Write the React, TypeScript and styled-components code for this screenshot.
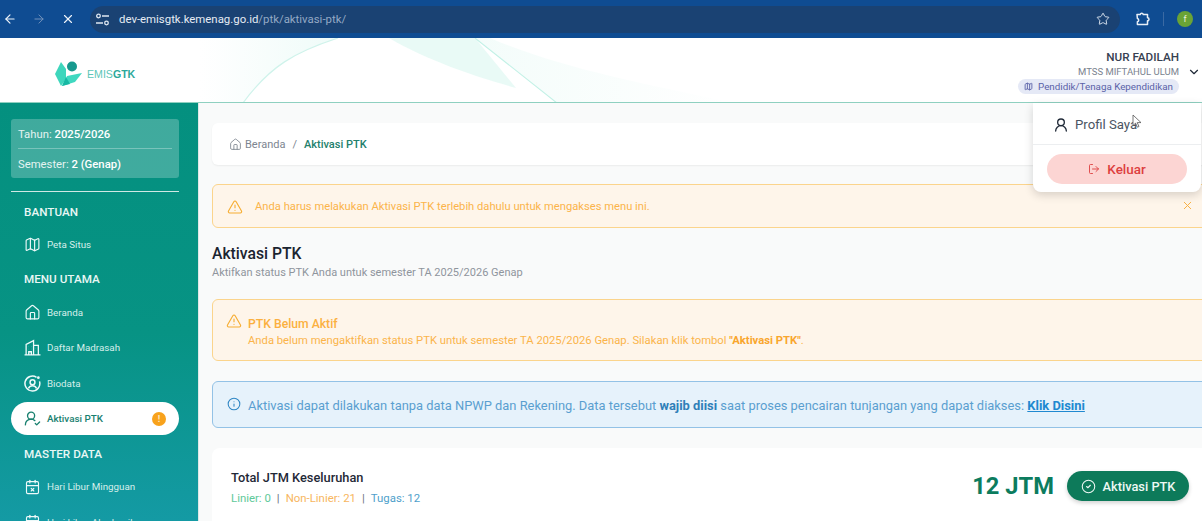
import React from 'react';
import styled, { createGlobalStyle } from 'styled-components';
import {
    ArrowLeft,
    ArrowRight,
    CalendarPlus,
    CalendarX,
    ChevronDown,
    CircleCheck,
    House,
    Info,
    LogOut,
    Map as MapIcon,
    Star,
    TriangleAlert,
    UserRound,
    UserRoundCheck,
    X
} from 'lucide-react';

const FONT = 'Roboto, "Noto Sans", "Liberation Sans", sans-serif';

const GlobalStyle = createGlobalStyle`
    html, body {
        margin: 0;
        padding: 0;
        background: #ffffff;
    }
    body {
        font-family: ${FONT};
        overflow: hidden;
    }
    * {
        box-sizing: border-box;
    }
`;

const Page = styled.div`
    position: relative;
    width: 1202px;
    height: 521px;
    overflow: hidden;
    display: flex;
    flex-direction: column;
`;

/* browser chrome */

const BrowserBar = styled.div`
    flex: 0 0 38px;
    height: 38px;
    background: #0f4c92;
    display: flex;
    align-items: center;
    gap: 9px;
    color: #e8eef6;
`;

const NavButton = styled.div<{ $dim?: boolean }>`
    width: 20px;
    display: flex;
    justify-content: center;
    color: ${(p) => (p.$dim ? '#7393bb' : '#eef3f9')};
`;

const AddressBar = styled.div`
    margin-left: 3px;
    flex: 1;
    height: 27px;
    background: #1a4273;
    border-radius: 14px;
    display: flex;
    align-items: center;
    padding: 0 10px 0 2px;
`;

const TuneBadge = styled.div`
    width: 20px;
    height: 20px;
    display: flex;
    align-items: center;
    justify-content: center;
    margin-right: 7px;
`;

const Url = styled.div`
    flex: 1;
    font-size: 11.4px;
    color: #e6ecf4;
`;

const UrlPath = styled.span`
    color: #94a9c5;
`;

const BarActions = styled.div`
    width: 73px;
    display: flex;
    align-items: center;
    padding-left: 6px;
`;

const BarDivider = styled.div`
    width: 1px;
    height: 14px;
    margin: 0 13px 0 12px;
    background: #3b6aa3;
`;

const Avatar = styled.div`
    width: 16px;
    height: 16px;
    border-radius: 50%;
    background: #6aa336;
    color: #e9f3dc;
    font-size: 9px;
    display: flex;
    align-items: center;
    justify-content: center;
`;

/* app header */

const Header = styled.header`
    position: relative;
    flex: 0 0 65px;
    height: 65px;
    background: #ffffff;
    border-bottom: 1px solid #8fd0c0;
    display: flex;
    align-items: flex-start;
    justify-content: space-between;
    padding-left: 55px;
    overflow: hidden;
`;

const Waves = styled.svg`
    position: absolute;
    left: 200px;
    top: 0;
`;

const Brand = styled.div`
    position: relative;
    display: flex;
    align-items: center;
    gap: 4px;
    margin-top: 23px;
`;

const BrandName = styled.div`
    font-family: 'Liberation Sans', sans-serif;
    font-size: 10.6px;
    color: #5cc6b8;
    b {
        color: #2ba89a;
    }
`;

const UserBlock = styled.div`
    position: relative;
    display: flex;
    align-items: center;
    gap: 8px;
    padding: 12px 1px 0 0;
`;

const UserInfo = styled.div`
    display: flex;
    flex-direction: column;
    align-items: flex-end;
`;

const UserName = styled.div`
    font-size: 11.7px;
    line-height: 15px;
    font-weight: 500;
    color: #374151;
`;

const UserSchool = styled.div`
    font-size: 9.5px;
    line-height: 14px;
    color: #7a828e;
`;

const RoleBadge = styled.div`
    display: flex;
    align-items: center;
    gap: 5px;
    height: 15px;
    padding: 0 6px;
    border-radius: 8px;
    background: #e5e9f6;
    color: #5a62a8;
    font-size: 9.8px;
`;

/* dropdown */

const Menu = styled.div`
    position: absolute;
    left: 1033px;
    top: 103px;
    width: 168px;
    height: 89px;
    background: #ffffff;
    border-radius: 0 0 8px 8px;
    box-shadow: 0 3px 10px rgba(0, 0, 0, 0.16);
    z-index: 5;
`;

const MenuItem = styled.div`
    height: 42px;
    padding: 2px 0 0 20px;
    border-bottom: 1px solid #eceef0;
    display: flex;
    align-items: center;
    gap: 6px;
    color: #1f2937;
    font-size: 13.2px;
    span {
        color: #4b5563;
    }
`;

const LogoutButton = styled.div`
    margin: 9px 14px 0;
    height: 30px;
    border-radius: 15px;
    background: #fcd5d3;
    color: #dc3f3f;
    font-size: 13.4px;
    font-weight: 500;
    display: flex;
    align-items: center;
    justify-content: center;
    gap: 7px;
`;

const Cursor = styled.svg`
    position: absolute;
    left: 1132px;
    top: 114px;
    z-index: 6;
`;

/* layout */

const Body = styled.div`
    flex: 1;
    display: flex;
    min-height: 0;
`;

const Sidebar = styled.aside`
    flex: 0 0 199px;
    width: 199px;
    padding: 16px 19px 0 11px;
    background: linear-gradient(180deg, #04907f 0%, #079384 55%, #149aa4 100%);
    border-right: 1px solid #dfe7e6;
    overflow: hidden;
`;

const YearBox = styled.div`
    height: 59px;
    padding: 0 7px;
    border-radius: 3px;
    background: rgba(255, 255, 255, 0.24);
    color: #e4f3f1;
    font-size: 11.3px;
    display: flex;
    flex-direction: column;
    b {
        color: #ffffff;
        font-weight: 500;
    }
`;

const YearRow = styled.div<{ $line?: boolean }>`
    flex: 1;
    padding-top: 1px;
    display: flex;
    align-items: center;
    white-space: pre;
    border-bottom: ${(p) => (p.$line ? '1px solid rgba(255,255,255,0.3)' : 'none')};
`;

const SideDivider = styled.div`
    height: 1px;
    margin: 13px 0 0;
    background: #cfe9e5;
`;

const SectionTitle = styled.div<{ $top: number }>`
    margin-top: ${(p) => p.$top}px;
    padding-left: 13px;
    height: 16px;
    line-height: 16px;
    font-size: 11.7px;
    font-weight: 500;
    color: #e9f7f5;
`;

const NavItem = styled.div<{ $active?: boolean; $top?: number }>`
    display: flex;
    align-items: center;
    gap: 6px;
    height: ${(p) => (p.$active ? '33px' : '35.5px')};
    margin-top: ${(p) => p.$top || 0}px;
    padding: 0 13px;
    font-size: 9.8px;
    border-radius: 17px;
    white-space: nowrap;
    color: ${(p) => (p.$active ? '#18806f' : '#d5efeb')};
    background: ${(p) => (p.$active ? '#ffffff' : 'transparent')};
    font-weight: ${(p) => (p.$active ? 500 : 400)};
    svg {
        flex: 0 0 17px;
        color: ${(p) => (p.$active ? '#18806f' : '#eefafa')};
    }
`;

const NavLabel = styled.span`
    flex: 1;
`;

const NavBadge = styled.span`
    width: 14px;
    height: 14px;
    border-radius: 50%;
    background: #f8a21c;
    color: #fde9c4;
    font-size: 9px;
    font-weight: 700;
    display: flex;
    align-items: center;
    justify-content: center;
`;

/* content */

const Main = styled.main`
    flex: 1;
    min-width: 0;
    padding: 20px 0 0 13px;
    background: #f9fafa;
    overflow: hidden;
`;

const Column = styled.div`
    width: 1000px;
    display: flex;
    flex-direction: column;
`;

const Breadcrumb = styled.div`
    height: 42px;
    padding: 0 17px;
    background: #ffffff;
    border-radius: 6px;
    box-shadow: 0 1px 2px rgba(0, 0, 0, 0.06);
    display: flex;
    align-items: center;
    font-size: 11px;
    color: #7d8590;
    svg {
        margin-right: 3px;
    }
`;

const CrumbSep = styled.span`
    margin: 0 7px;
`;

const CrumbCurrent = styled.span`
    color: #23806c;
    font-weight: 500;
`;

const Alert = styled.div<{ $tone: 'warn' | 'info'; $height: number; $top: number }>`
    position: relative;
    height: ${(p) => p.$height}px;
    margin-top: ${(p) => p.$top}px;
    padding-top: 1px;
    border-radius: 6px;
    border: 1px solid ${(p) => (p.$tone === 'warn' ? '#fbd48c' : '#93c2e6')};
    background: ${(p) => (p.$tone === 'warn' ? '#fef5ea' : '#e6f2fb')};
    color: ${(p) => (p.$tone === 'warn' ? '#fbb44a' : '#4d9ad0')};
    font-size: 11.2px;
    display: flex;
    align-items: center;
`;

const WarnLine = styled.div`
    padding-left: 14px;
    display: flex;
    align-items: center;
    gap: 12px;
    color: #fbb44a;
`;

const AlertClose = styled.div`
    position: absolute;
    right: 17px;
    top: 14px;
    color: #f9b040;
    display: flex;
`;

const PageTitle = styled.h1`
    margin: 15px 0 0;
    font-size: 15.7px;
    line-height: 21px;
    font-weight: 500;
    color: #1b2430;
`;

const PageSub = styled.div`
    margin-top: 1px;
    font-size: 11px;
    line-height: 15px;
    color: #8f959d;
`;

const AlertGroup = styled.div`
    padding: 10px 0 0 13px;
    align-self: flex-start;
    display: flex;
    gap: 6px;
    svg {
        margin-top: 2px;
    }
`;

const AlertTitle = styled.div`
    margin-top: 5px;
    font-size: 12.2px;
    line-height: 17px;
    font-weight: 500;
    color: #fbb040;
`;

const AlertText = styled.div`
    margin-top: -1px;
    font-size: 11.25px;
    line-height: 17px;
    b {
        font-weight: 700;
        color: #f9a62e;
    }
`;

const InfoLine = styled.div`
    padding-left: 14px;
    display: flex;
    align-items: center;
    gap: 7px;
    font-size: 12.9px;
    color: #5a9fd0;
    b {
        font-weight: 700;
        color: #2f7fb8;
    }
    svg {
        margin-top: -3px;
    }
`;

const KlikLink = styled.a`
    font-weight: 700;
    color: #2089d0;
    text-decoration: underline;
`;

const JtmCard = styled.div`
    margin-top: 20px;
    height: 100px;
    padding: 21px 23px 0 19px;
    background: #ffffff;
    border-radius: 8px;
    display: flex;
    justify-content: space-between;
`;

const JtmTitle = styled.div`
    font-size: 12.8px;
    line-height: 18px;
    font-weight: 500;
    color: #1f2937;
`;

const JtmStats = styled.div`
    margin-top: 3px;
    font-size: 11.4px;
    line-height: 16px;
    color: #6b7280;
    display: flex;
    gap: 6px;
`;

const Stat = styled.span<{ $color: string }>`
    color: ${(p) => p.$color};
`;

const JtmRight = styled.div`
    display: flex;
    align-items: flex-start;
    gap: 13px;
`;

const JtmValue = styled.div`
    font-size: 23.7px;
    line-height: 34px;
    font-weight: 700;
    color: #0c7c5e;
`;

const ActivateButton = styled.div`
    width: 122px;
    height: 30px;
    margin-top: 2px;
    border-radius: 15px;
    background: #0d7a5a;
    color: #eef8f4;
    font-size: 12.8px;
    font-weight: 500;
    display: flex;
    align-items: center;
    justify-content: center;
    gap: 7px;
    box-shadow: 0 2px 4px rgba(0, 0, 0, 0.18);
`;

/* drawings */

function TuneIcon() {
    return (
        <svg width="15" height="13" viewBox="0 0 15 13" fill="none" stroke="#dfe7f1" strokeWidth="1.3">
            <circle cx="3.5" cy="3" r="1.8" />
            <path d="M7 3h7M1 10h7" />
            <circle cx="11.5" cy="10" r="1.8" />
        </svg>
    );
}

function ExtensionIcon() {
    return (
        <svg width="16" height="16" viewBox="0 0 16 16" fill="none" stroke="#e8eef6" strokeWidth="1.5" strokeLinejoin="round">
            <path d="M2 3.5h3.2a1.6 1.6 0 0 1 3.1 0h4.2v3.3a1.5 1.5 0 0 1 0 3v3.7H2.4v-2.7a1.7 1.7 0 0 0 0-3.3z" />
        </svg>
    );
}

function Logo() {
    return (
        <svg width="28" height="26" viewBox="0 0 28 26">
            <path d="M6 1 L11 8 L11 18 L6 25 L0 13 Z" fill="#3ed6bc" />
            <path d="M7 25 L12 15 L27 12 L20 21 Z" fill="#3fd8c0" />
            <path d="M7 25 L11 16 L15 23 Z" fill="#16b9a4" />
            <circle cx="17" cy="5.5" r="5" fill="#17998e" />
        </svg>
    );
}

function BuildingIcon({ size = 17 }: { size?: number }) {
    return (
        <svg width={size} height={size} viewBox="0 0 16 16" fill="none" stroke="currentColor" strokeWidth="1.2">
            <path d="M0.5 15h15M2 15V5l7-3.5V15M9 6h4.5v9" />
            <path d="M4.5 7h.1M6.8 7h.1M4.5 9.5h.1M6.8 9.5h.1M11 9h.1M11 11.5h.1M4.5 15v-3h2.4v3" strokeWidth="1.3" />
        </svg>
    );
}

function BiodataIcon({ size = 17 }: { size?: number }) {
    return (
        <svg width={size} height={size} viewBox="0 0 16 16" fill="none" stroke="currentColor" strokeWidth="1.4">
            <path d="M11.8 2.2A7 7 0 1 0 14.6 6" />
            <circle cx="8" cy="6.8" r="2.3" />
            <path d="M4.2 12.6c.8-1.7 2.2-2.4 3.8-2.4s3 .7 3.8 2.4" />
            <circle cx="13.5" cy="2.5" r="1.3" fill="currentColor" stroke="none" />
        </svg>
    );
}

function HeaderWaves() {
    return (
        <Waves width="620" height="65" viewBox="0 0 620 65" fill="none">
            <defs>
                <linearGradient id="leftFade" x1="0" x2="1" y1="0" y2="0">
                    <stop offset="0" stopColor="#e6f9f5" stopOpacity="0" />
                    <stop offset="1" stopColor="#e6f9f5" stopOpacity="0.65" />
                </linearGradient>
                <linearGradient id="waveFade" x1="0" x2="1" y1="0" y2="0">
                    <stop offset="0" stopColor="#d9f6ef" stopOpacity="0.6" />
                    <stop offset="1" stopColor="#d9f6ef" stopOpacity="0" />
                </linearGradient>
            </defs>
            <path d="M0 0H138C95 14 70 28 43 65H0Z" fill="url(#leftFade)" />
            <path d="M43 65C70 28 95 14 138 0" stroke="#cff3eb" strokeWidth="1.2" />
            <path d="M189 0C230 24 280 40 316 50L275 0Z" fill="#e1f8f3" opacity="0.75" />
            <path d="M275 0L357 65" stroke="#bff0e5" strokeWidth="1.1" />
            <path d="M290 0C360 30 440 45 535 65H357L275 0Z" fill="url(#waveFade)" opacity="0.5" />
        </Waves>
    );
}

const MENU_UTAMA = [
    { label: 'Beranda', icon: <House size={17} strokeWidth={1.6} /> },
    { label: 'Daftar Madrasah', icon: <BuildingIcon /> },
    { label: 'Biodata', icon: <BiodataIcon /> }
];

const MASTER_DATA = [
    { label: 'Hari Libur Mingguan', icon: <CalendarX size={16} strokeWidth={1.7} /> },
    { label: 'Hari Libur Akademik', icon: <CalendarPlus size={16} strokeWidth={1.7} /> }
];

export default function App() {
    return (
        <Page>
            <GlobalStyle />
            <BrowserBar>
                <NavButton>
                    <ArrowLeft size={14} strokeWidth={2} />
                </NavButton>
                <NavButton $dim>
                    <ArrowRight size={14} strokeWidth={1.7} />
                </NavButton>
                <NavButton>
                    <X size={14} strokeWidth={2} />
                </NavButton>
                <AddressBar>
                    <TuneBadge>
                        <TuneIcon />
                    </TuneBadge>
                    <Url>
                        dev-emisgtk.kemenag.go.id<UrlPath>/ptk/aktivasi-ptk/</UrlPath>
                    </Url>
                    <Star size={14} strokeWidth={1.6} color="#dfe7f1" />
                </AddressBar>
                <BarActions>
                    <ExtensionIcon />
                    <BarDivider />
                    <Avatar>f</Avatar>
                </BarActions>
            </BrowserBar>

            <Header>
                <HeaderWaves />
                <Brand>
                    <Logo />
                    <BrandName>
                        EMIS<b>GTK</b>
                    </BrandName>
                </Brand>
                <UserBlock>
                    <UserInfo>
                        <UserName>NUR FADILAH</UserName>
                        <UserSchool>MTSS MIFTAHUL ULUM</UserSchool>
                        <RoleBadge>
                            <MapIcon size={9} strokeWidth={2.4} />
                            Pendidik/Tenaga Kependidikan
                        </RoleBadge>
                    </UserInfo>
                    <ChevronDown size={14} strokeWidth={2} color="#1f2937" />
                </UserBlock>
            </Header>

            <Body>
                <Sidebar>
                    <YearBox>
                        <YearRow $line>
                            Tahun: <b>2025/2026</b>
                        </YearRow>
                        <YearRow>
                            Semester: <b>2 (Genap)</b>
                        </YearRow>
                    </YearBox>
                    <SideDivider />
                    <SectionTitle $top={12}>BANTUAN</SectionTitle>
                    <NavItem $top={7}>
                        <MapIcon size={17} strokeWidth={1.6} />
                        <NavLabel>Peta Situs</NavLabel>
                    </NavItem>
                    <SectionTitle $top={8}>MENU UTAMA</SectionTitle>
                    <NavItem $top={8}>{MENU_UTAMA[0].icon}<NavLabel>{MENU_UTAMA[0].label}</NavLabel></NavItem>
                    {MENU_UTAMA.slice(1).map((item) => (
                        <NavItem key={item.label}>
                            {item.icon}
                            <NavLabel>{item.label}</NavLabel>
                        </NavItem>
                    ))}
                    <NavItem $active $top={1}>
                        <UserRoundCheck size={17} strokeWidth={1.9} />
                        <NavLabel>Aktivasi PTK</NavLabel>
                        <NavBadge>!</NavBadge>
                    </NavItem>
                    <SectionTitle $top={11}>MASTER DATA</SectionTitle>
                    {MASTER_DATA.map((item, i) => (
                        <NavItem key={item.label} $top={i === 0 ? 7 : 0}>
                            {item.icon}
                            <NavLabel>{item.label}</NavLabel>
                        </NavItem>
                    ))}
                </Sidebar>

                <Main>
                    <Column>
                        <Breadcrumb>
                            <House size={13} strokeWidth={1.6} />
                            Beranda
                            <CrumbSep>/</CrumbSep>
                            <CrumbCurrent>Aktivasi PTK</CrumbCurrent>
                        </Breadcrumb>

                        <Alert $tone="warn" $height={44} $top={19}>
                            <WarnLine>
                                <TriangleAlert size={16} strokeWidth={1.7} color="#f6ad32" />
                                Anda harus melakukan Aktivasi PTK terlebih dahulu untuk mengakses menu ini.
                            </WarnLine>
                            <AlertClose>
                                <X size={13} strokeWidth={1.8} />
                            </AlertClose>
                        </Alert>

                        <PageTitle>Aktivasi PTK</PageTitle>
                        <PageSub>Aktifkan status PTK Anda untuk semester TA 2025/2026 Genap</PageSub>

                        <Alert $tone="warn" $height={62} $top={19}>
                            <AlertGroup>
                                <TriangleAlert size={16} strokeWidth={1.7} color="#f6ad32" />
                                <div>
                                    <AlertTitle>PTK Belum Aktif</AlertTitle>
                                    <AlertText>
                                        Anda belum mengaktifkan status PTK untuk semester TA 2025/2026 Genap. Silakan klik tombol{' '}
                                        <b>"Aktivasi PTK"</b>.
                                    </AlertText>
                                </div>
                            </AlertGroup>
                        </Alert>

                        <Alert $tone="info" $height={47} $top={20}>
                            <InfoLine>
                                <Info size={14} strokeWidth={1.8} color="#2f86c4" />
                                <span>
                                    Aktivasi dapat dilakukan tanpa data NPWP dan Rekening. Data tersebut <b>wajib diisi</b> saat
                                    proses pencairan tunjangan yang dapat diakses: <KlikLink>Klik Disini</KlikLink>
                                </span>
                            </InfoLine>
                        </Alert>

                        <JtmCard>
                            <div>
                                <JtmTitle>Total JTM Keseluruhan</JtmTitle>
                                <JtmStats>
                                    <Stat $color="#5ec99a">Linier: 0</Stat>|
                                    <Stat $color="#f7b660">Non-Linier: 21</Stat>|
                                    <Stat $color="#4f9fcb">Tugas: 12</Stat>
                                </JtmStats>
                            </div>
                            <JtmRight>
                                <JtmValue>12 JTM</JtmValue>
                                <ActivateButton>
                                    <CircleCheck size={15} strokeWidth={1.7} />
                                    Aktivasi PTK
                                </ActivateButton>
                            </JtmRight>
                        </JtmCard>
                    </Column>
                </Main>
            </Body>

            <Menu>
                <MenuItem>
                    <UserRound size={16} strokeWidth={2} />
                    <span>Profil Saya</span>
                </MenuItem>
                <LogoutButton>
                    <LogOut size={12} strokeWidth={1.8} />
                    Keluar
                </LogoutButton>
            </Menu>
            <Cursor width="10" height="15" viewBox="0 0 10 15">
                <path d="M1 1v10.5l2.6-2.3 1.8 4 1.6-.7-1.8-3.9H9z" fill="#ffffff" stroke="#555" strokeWidth="0.8" />
            </Cursor>
        </Page>
    );
}
